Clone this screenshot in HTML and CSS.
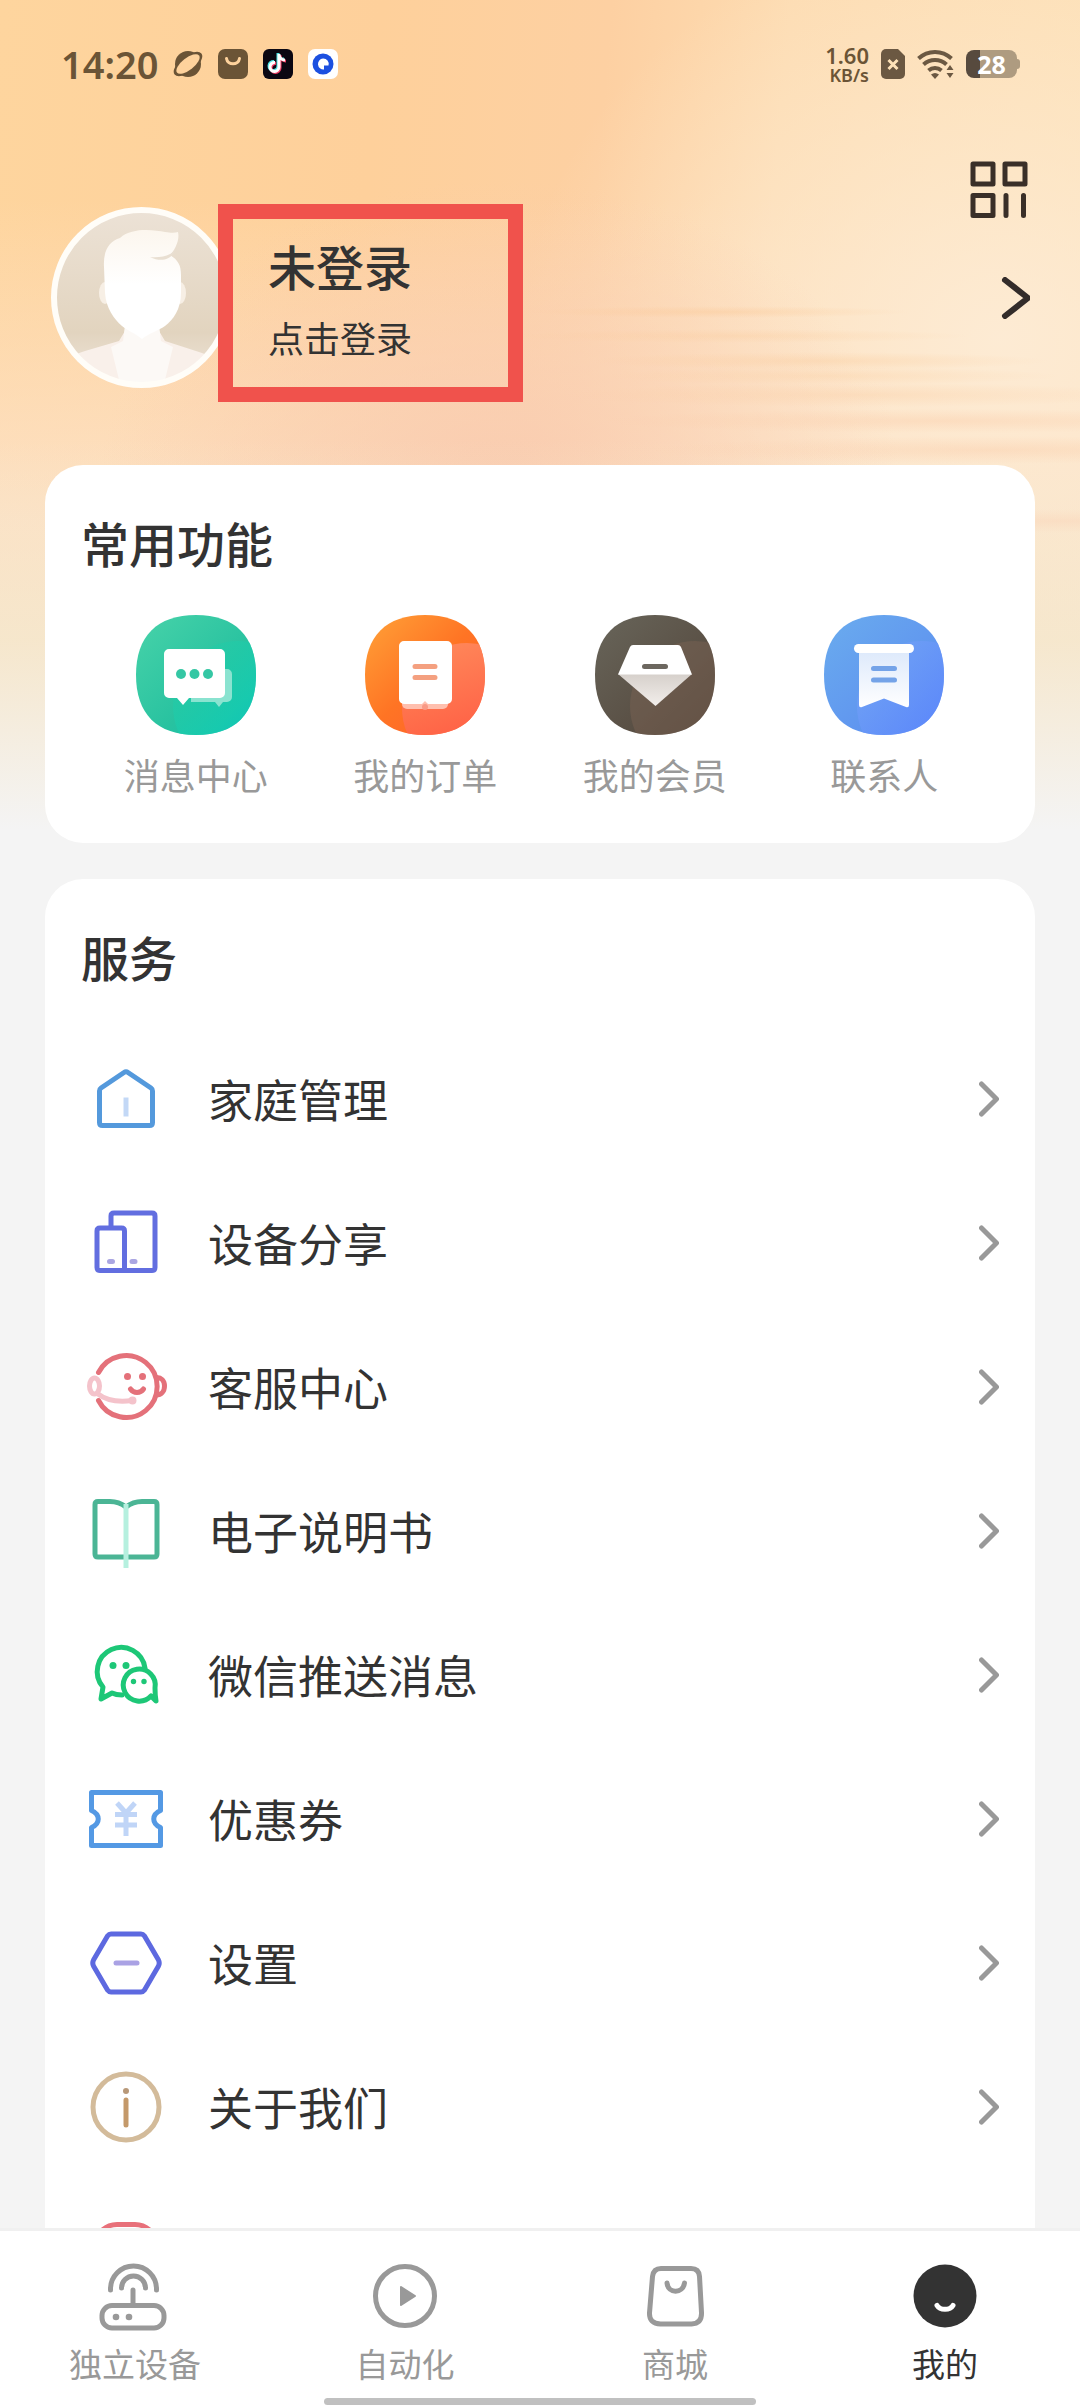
FILE: index.html
```html
<!DOCTYPE html>
<html lang="zh-CN">
	<head>
		<meta charset="UTF-8">
		<meta name="viewport" content="width=device-width">
		<title>我的</title>
		<link rel="stylesheet" href="styles.css">
	</head>
	<body>
		<main class="page">
			<header class="status">
				<div class="status-left">
					<span class="time">14:20</span>
					<svg width="30" height="30" viewBox="0 0 30 30">
						<circle cx="15" cy="15" r="13" fill="#6b5436"/>
						<ellipse cx="15" cy="15" rx="17" ry="8" fill="#6b5436" transform="rotate(-38 15 15)"/>
						<ellipse cx="15" cy="15" rx="14" ry="6" fill="#fed29c" transform="rotate(-38 15 15)"/>
					</svg>
					<svg width="30" height="30" viewBox="0 0 30 30">
						<rect width="30" height="30" rx="7" fill="#6b5436"/>
						<path d="M8.500 9.500c1 7 12 7 13 0" fill="none" stroke="#fed29c" stroke-width="3" stroke-linecap="round"/>
					</svg>
					<svg width="30" height="30" viewBox="0 0 30 30">
						<rect width="30" height="30" rx="6" fill="#0b0712"/>
						<path d="M16 5v13a4.500 4.500 0 1 1-4-4.500M16 6c1 4 3 5 6 5" transform="translate(-1 -1)" fill="none" stroke="#4ce4e4" stroke-width="3"/>
						<path d="M16 5v13a4.500 4.500 0 1 1-4-4.500M16 6c1 4 3 5 6 5" transform="translate(1 1)" fill="none" stroke="#ef3c64" stroke-width="3"/>
						<path d="M16 5v13a4.500 4.500 0 1 1-4-4.500M16 6c1 4 3 5 6 5" fill="none" stroke="#fff" stroke-width="3"/>
					</svg>
					<svg width="30" height="30" viewBox="0 0 30 30">
						<rect width="30" height="30" rx="7" fill="#fff"/>
						<circle cx="15" cy="15" r="10.500" fill="#1c50e0"/>
						<path d="M15 9.500a5.500 5.500 0 1 0 1 11v-4h4.500a5.500 5.500 0 0 0-5.500-7z" fill="#fff"/>
					</svg>
				</div>
				<div class="status-right">
					<div class="speed"><b>1.60</b><span>KB/s</span></div>
					<svg width="24" height="30" viewBox="0 0 24 30">
						<path d="M5 0h12l7 7v18a5 5 0 0 1-5 5H5a5 5 0 0 1-5-5V5a5 5 0 0 1 5-5z" fill="#6b5842"/>
						<path d="M7.500 11l9 9m0-9l-9 9" stroke="#fee2b8" stroke-width="3"/>
					</svg>
					<svg width="37" height="30" viewBox="0 0 37 30">
						<g fill="none" stroke="#6b5842" stroke-width="4">
							<path d="M1.500 9.500a24 24 0 0 1 33 0"/>
							<path d="M6.500 15.500a17 17 0 0 1 23 0"/>
							<path d="M11.500 21.500a10 10 0 0 1 13 0"/>
						</g>
						<path d="M14 25.500q4-3 8 0l-4 4.500z" fill="#6b5842"/>
						<path d="M33 16l3.500 5h-7zM33 29l3.500-5h-7z" fill="#6b5842"/>
					</svg>
					<div class="battery"><span>28</span></div>
				</div>
			</header>

			<section class="profile">
				<a class="user" href="#login">
					<svg class="avatar" width="181" height="181" viewBox="0 0 181 181">
						<defs>
							<linearGradient id="avatar-bg" x1="0" y1="0" x2="0" y2="1">
								<stop offset="0" stop-color="#ece2d6"/>
								<stop offset=".7" stop-color="#e2d4bf"/>
								<stop offset="1" stop-color="#efe6dc"/>
							</linearGradient>
							<linearGradient id="hair" x1="0" y1="0" x2="0" y2="1">
								<stop offset="0" stop-color="#fcf6ee"/>
								<stop offset=".5" stop-color="#ffffff"/>
							</linearGradient>
							<clipPath id="avatar-clip"><circle cx="90.500" cy="90.500" r="87"/></clipPath>
						</defs>
						<circle cx="90.500" cy="90.500" r="87.500" fill="url(#avatar-bg)"/>
						<g clip-path="url(#avatar-clip)">
							<path d="M0 181C4 158 20 148 34 144l34-10 6-10h34l6 10 34 11c14 4 30 16 33 36z" fill="#f9f0ea"/>
							<path d="M74 118h34l2 16 12 6-10 41H70L60 140l12-6z" fill="#fcf9f6"/>
							<ellipse cx="54" cy="86" rx="6" ry="11" fill="#f7efe5"/>
							<ellipse cx="129" cy="86" rx="6" ry="11" fill="#f7efe5"/>
							<path d="M53 60c-1-16 5-26 16-29 12-11 34-8 45-6 6 1 10 1 13 0 2 8-3 18-8 23 8 5 11 10 11 20v18c0 16-8 27-16 33-7 5-16 7-23 13-7-6-14-8-20-13-8-7-16-18-17-33z" fill="url(#hair)"/>
							<path d="M99 50c10 1 20-1 25-7-3 9-13 13-25 7z" fill="#e9dfd2"/>
						</g>
						<circle cx="90.500" cy="90.500" r="87.500" fill="none" stroke="#fffdf8" stroke-width="6"/>
					</svg>
					<span class="login">
						<strong>未登录</strong>
						<span>点击登录</span>
					</span>
				</a>
				<div class="tools">
					<button type="button" aria-label="二维码">
						<svg width="60" height="57" viewBox="0 0 60 57" fill="none" stroke="#3a2f28" stroke-width="5" stroke-linejoin="round" stroke-linecap="round">
							<path d="M3 3h20v20H3zM35 3h20v20H35zM3 34.500h20v20H3zM36 34.500v20M53.500 34.500v20"/>
						</svg>
					</button>
					<button type="button" aria-label="个人资料">
						<svg width="60" height="42" viewBox="0 0 60 42" fill="none" stroke="#332c2a" stroke-width="6" stroke-linejoin="round" stroke-linecap="round">
							<path d="M35 3l23 18-23 18"/>
						</svg>
					</button>
				</div>
			</section>

			<section class="card">
				<h2>常用功能</h2>
				<nav class="shortcuts">
					<a href="#message">
						<svg width="120" height="120" viewBox="0 0 120 120">
							<defs>
								<linearGradient id="green" x1="0" y1="0" x2="1" y2="1"><stop offset="0" stop-color="#48d3a9"/><stop offset=".6" stop-color="#28c2a0"/><stop offset="1" stop-color="#10bfb4"/></linearGradient>
								<linearGradient id="green2" x1="0" y1="0" x2="1" y2="1"><stop offset="0" stop-color="#2cc9a0"/><stop offset=".5" stop-color="#16cdb0"/><stop offset="1" stop-color="#00b8c8"/></linearGradient>
								<clipPath id="tile"><path d="M60 0c39 0 60 21 60 60s-21 60-60 60S0 99 0 60 21 0 60 0z"/></clipPath>
							</defs>
							<g clip-path="url(#tile)">
								<rect width="120" height="120" fill="url(#green)"/>
								<circle cx="102" cy="91" r="65" fill="url(#green2)" opacity=".7"/>
							</g>
							<path d="M55 54h36a5 5 0 0 1 5 5v23a5 5 0 0 1-5 5h-4l-4 5-4-5H55z" fill="#8ae3d0"/>
							<path d="M33 34h51a5 5 0 0 1 5 5v39a5 5 0 0 1-5 5H53l-6 7-6-7h-8a5 5 0 0 1-5-5V39a5 5 0 0 1 5-5z" fill="#fff"/>
							<g fill="#35c7a4"><circle cx="45" cy="59" r="5"/><circle cx="58.500" cy="59" r="5"/><circle cx="72" cy="59" r="5"/></g>
						</svg>
						<span>消息中心</span>
					</a>
					<a href="#order">
						<svg width="120" height="120" viewBox="0 0 120 120">
							<defs>
								<linearGradient id="orange" x1="0" y1="0" x2="1" y2="1"><stop offset="0" stop-color="#ffa238"/><stop offset=".5" stop-color="#ff7424"/><stop offset="1" stop-color="#ff5c30"/></linearGradient>
								<linearGradient id="orange2" x1=".3" y1="0" x2=".6" y2="1"><stop offset="0" stop-color="#ff8a62"/><stop offset="1" stop-color="#ff5040"/></linearGradient>
							</defs>
							<g clip-path="url(#tile)">
								<rect width="120" height="120" fill="url(#orange)"/>
								<circle cx="102" cy="93" r="65" fill="url(#orange2)" opacity=".85"/>
							</g>
							<path d="M37 86h46v3a5 5 0 0 1-5 5H42a5 5 0 0 1-5-5z" fill="#ffbfae"/>
							<path d="M39 26h43a5 5 0 0 1 5 5v53a5 5 0 0 1-5 5H63l-3-3-3 3H39a5 5 0 0 1-5-5V31a5 5 0 0 1 5-5z" fill="#fff"/>
							<circle cx="60" cy="92" r="3" fill="#f99a86"/>
							<path d="M50 51.500h20M50 62.500h20" stroke="#f4a080" stroke-width="5" stroke-linecap="round"/>
						</svg>
						<span>我的订单</span>
					</a>
					<a href="#member">
						<svg width="120" height="120" viewBox="0 0 120 120">
							<defs>
								<linearGradient id="brown" x1="0" y1="0" x2="1" y2="1"><stop offset="0" stop-color="#68655a"/><stop offset="1" stop-color="#514338"/></linearGradient>
								<linearGradient id="gem" x1="0" y1="0" x2="0" y2="1"><stop offset="0" stop-color="#d6d0cb"/><stop offset="1" stop-color="#f2eeeb"/></linearGradient>
							</defs>
							<g clip-path="url(#tile)">
								<rect width="120" height="120" fill="url(#brown)"/>
								<circle cx="100" cy="91" r="65" fill="#7c6454" opacity=".45"/>
							</g>
							<path d="M23 59h74L60.500 91z" fill="url(#gem)"/>
							<path d="M38 30h45q2 0 3 2l11 27.500H23L35 32q1-2 3-2z" fill="#fff"/>
							<path d="M49.500 51.500h21" stroke="#6c675f" stroke-width="5" stroke-linecap="round"/>
						</svg>
						<span>我的会员</span>
					</a>
					<a href="#contact">
						<svg width="120" height="120" viewBox="0 0 120 120">
							<defs>
								<linearGradient id="blue" x1="0" y1="0" x2="1" y2="1"><stop offset="0" stop-color="#6aacee"/><stop offset="1" stop-color="#5a88f0"/></linearGradient>
								<linearGradient id="blue2" x1="0" y1="0" x2=".7" y2=".6"><stop offset="0" stop-color="#7aaaf4"/><stop offset="1" stop-color="#5c86ff"/></linearGradient>
								<linearGradient id="flag" x1="0" y1="0" x2="0" y2="1"><stop offset="0" stop-color="#dde9fb"/><stop offset="1" stop-color="#ffffff"/></linearGradient>
							</defs>
							<g clip-path="url(#tile)">
								<rect width="120" height="120" fill="url(#blue)"/>
								<circle cx="98" cy="91" r="65" fill="url(#blue2)" opacity=".7"/>
							</g>
							<path d="M35 36h50v54q0 3-3 2L60 83.500 38 92q-3 1-3-2z" fill="url(#flag)"/>
							<rect x="30" y="29" width="60" height="9" rx="4.500" fill="#fff"/>
							<path d="M49.500 53.500h21M49.500 65h21" stroke="#74a3e8" stroke-width="5" stroke-linecap="round"/>
						</svg>
						<span>联系人</span>
					</a>
				</nav>
			</section>

			<section class="card services">
				<h2>服务</h2>
				<ul>
					<li><a href="#home">
						<svg class="icon" viewBox="0 0 90 90" stroke="#5499dc">
							<path d="M43 18.500q2-1.500 4 0L70 34q1.500 1 1.500 3v31.500q0 3-3 3h-47q-3 0-3-3V37q0-2 1.500-3z"/>
							<path d="M45 43.500v19" stroke="#c3d8f6" stroke-linecap="butt"/>
						</svg>
						<span>家庭管理</span>
						<svg class="arrow" viewBox="0 0 20 36"><path d="M2.500 3l15 15-15 15"/></svg>
					</a></li>
					<li><a href="#share">
						<svg class="icon" viewBox="0 0 90 90" stroke="#626ee0">
							<path d="M30 30V18q0-3 3-3h38q3 0 3 3v51.500q0 3-3 3H19q-3 0-3-3V33q0-3 3-3h21.500q3 0 3 3v39"/>
							<path d="M28.500 63.500h3M51 63.500h3" stroke="#aaa6e2"/>
						</svg>
						<span>设备分享</span>
						<svg class="arrow" viewBox="0 0 20 36"><path d="M2.500 3l15 15-15 15"/></svg>
					</a></li>
					<li><a href="#support">
						<svg class="icon" viewBox="0 0 90 90" stroke="#e4717a">
							<path d="M17.500 30.500a31 31 0 1 1 0 28"/>
							<path d="M76 35.500c4 0 7.500 3 7.500 8.500S80 53 75.500 53"/>
							<ellipse cx="13.500" cy="44" rx="5" ry="8" stroke="#f4c3cb"/>
							<path d="M17 52c9 7 22 8 34 6.500" stroke="#f4c3cb"/>
							<circle cx="51.500" cy="58.500" r="1.500" stroke="#f4c3cb"/>
							<path d="M49.500 47c3 4.500 10 4.500 13 0"/>
							<g fill="#e4717a" stroke="none"><circle cx="46.500" cy="34.500" r="3.500"/><circle cx="61.500" cy="34.500" r="3.500"/></g>
						</svg>
						<span>客服中心</span>
						<svg class="arrow" viewBox="0 0 20 36"><path d="M2.500 3l15 15-15 15"/></svg>
					</a></li>
					<li><a href="#manual">
						<svg class="icon" viewBox="0 0 90 90" stroke="#4bb595">
							<path d="M45 21q-7-5.500-16-5.500H17q-3 0-3 3v49.500q0 3 3 3h56q3 0 3-3V18.500q0-3-3-3H61q-9 0-16 5.500"/>
							<path d="M45 18v64" stroke="#b6f0df" stroke-linecap="butt"/>
						</svg>
						<span>电子说明书</span>
						<svg class="arrow" viewBox="0 0 20 36"><path d="M2.500 3l15 15-15 15"/></svg>
					</a></li>
					<li><a href="#wechat">
						<svg class="icon" viewBox="0 0 90 90" stroke="#1dc777">
							<path d="M41 65q-6 0-10-2l-11 6 2-12A24 24 0 1 1 64 38"/>
							<path d="M70 66a16 16 0 1 1 4-8q0 7 1 13z"/>
							<g fill="#1dc777" stroke="none"><circle cx="32" cy="35.500" r="3.500"/><circle cx="45" cy="35.500" r="3.500"/><circle cx="52.500" cy="51.500" r="2.700"/><circle cx="63" cy="51.500" r="2.700"/></g>
						</svg>
						<span>微信推送消息</span>
						<svg class="arrow" viewBox="0 0 20 36"><path d="M2.500 3l15 15-15 15"/></svg>
					</a></li>
					<li><a href="#coupon">
						<svg class="icon" viewBox="0 0 90 90" stroke="#5499e4">
							<path d="M10.500 18.500h69v18c-9 4-9 13 0 17v18h-69v-18c9-4 9-13 0-17z"/>
							<path d="M36 29l9 10 9-10M45 39v23M34 40.500h22M34 51h22" stroke="#c0d5f7" stroke-linecap="butt"/>
						</svg>
						<span>优惠券</span>
						<svg class="arrow" viewBox="0 0 20 36"><path d="M2.500 3l15 15-15 15"/></svg>
					</a></li>
					<li><a href="#settings">
						<svg class="icon" viewBox="0 0 90 90" stroke="#5d69e0">
							<path d="M30 16h30q2 0 3.500 2l14 24q1.500 3 0 6l-14 24q-1.500 2-3.500 2H30q-2 0-3.500-2l-14-24q-1.500-3 0-6l14-24q1.500-2 3.500-2z"/>
							<path d="M35 45h21" stroke="#aaa2e4"/>
						</svg>
						<span>设置</span>
						<svg class="arrow" viewBox="0 0 20 36"><path d="M2.500 3l15 15-15 15"/></svg>
					</a></li>
					<li><a href="#about">
						<svg class="icon" viewBox="0 0 90 90" stroke="#d3bb9a">
							<circle cx="45" cy="45" r="33"/>
							<path d="M45 38v25" stroke="#c4996a"/>
							<circle cx="45" cy="29" r="3" fill="#b89878" stroke="none"/>
						</svg>
						<span>关于我们</span>
						<svg class="arrow" viewBox="0 0 20 36"><path d="M2.500 3l15 15-15 15"/></svg>
					</a></li>
					<li><a href="#more" aria-label="更多">
						<svg class="icon" viewBox="0 0 90 90" stroke="#e8707a">
							<rect x="14" y="18.500" width="62" height="56" rx="22"/>
						</svg>
					</a></li>
				</ul>
			</section>
		</main>

		<footer class="tabbar">
			<nav class="tabs">
				<a href="#device">
					<svg viewBox="0 0 72 72">
						<path d="M11.500 30v-1a23 23 0 0 1 46 0v1M22.500 28a12 12 0 0 1 24 0M34 30v14"/>
						<rect x="3" y="45.500" width="62" height="22.500" rx="10"/>
						<g fill="#999" stroke="none"><circle cx="17" cy="57" r="3.300"/><circle cx="30" cy="57" r="3.300"/></g>
					</svg>
					<span>独立设备</span>
				</a>
				<a href="#auto">
					<svg viewBox="0 0 72 72">
						<circle cx="36" cy="36" r="29.500"/>
						<path d="M32 27l14 9-14 9z" fill="#999" stroke-width="2"/>
					</svg>
					<span>自动化</span>
				</a>
				<a href="#shop">
					<svg viewBox="0 0 72 72">
						<path d="M22 8.500h30q8 0 8.500 8l2 36q.5 11-10 11.500h-31Q10 63.500 10.500 53l3-36.500q1-8 8.500-8z"/>
						<path d="M28 23c1 11 16 11 17.500 0"/>
					</svg>
					<span>商城</span>
				</a>
				<a class="now" href="#mine">
					<svg viewBox="0 0 72 72">
						<circle cx="36" cy="36" r="31.500" fill="#333" stroke="none"/>
						<path d="M28 45.500c3 5 13 5 16 0" stroke="#fff"/>
					</svg>
					<span>我的</span>
				</a>
			</nav>
			<div class="home-bar"></div>
		</footer>
	</body>
</html>
```

FILE: styles.css
```css
*{margin: 0;padding: 0;box-sizing: border-box;}
body{
	height: 100vh;
	display: flex;
	flex-direction: column;
	background: #f4f4f4;
	font-family: "Noto Sans CJK SC", sans-serif;
	color: #333;
}
ul{list-style: none;}
a{color: inherit;text-decoration: none;}
svg{display: block;flex: none;}
button{border: 0;background: none;}

.page{
	flex: 1;
	min-height: 0;
	overflow: auto;
	scrollbar-width: none;
	/* streaks, fade to grey, then the warm glow */
	background:
		radial-gradient(190px 6px at 720px 312px, rgba(250,195,140,.35), transparent),
		radial-gradient(230px 7px at 740px 336px, rgba(250,200,150,.3), transparent),
		radial-gradient(230px 9px at 820px 361px, rgba(250,200,150,.35), transparent),
		radial-gradient(230px 9px at 830px 376px, rgba(250,203,155,.3), transparent),
		radial-gradient(300px 12px at 860px 395px, rgba(250,203,160,.35), transparent),
		radial-gradient(340px 12px at 940px 421px, rgba(250,198,160,.35), transparent),
		radial-gradient(340px 14px at 990px 450px, rgba(250,198,160,.35), transparent),
		radial-gradient(300px 12px at 1060px 521px, rgba(250,205,175,.35), transparent),
		linear-gradient(transparent 440px, rgba(244,232,206,.8) 640px, #f4f4f4 830px),
		radial-gradient(400px 300px at 500px 480px, rgba(249,202,174,.9), rgba(249,202,174,0)),
		radial-gradient(480px 420px at 1000px 340px, rgba(253,236,214,.9), rgba(253,236,214,0)),
		linear-gradient(rgba(253,226,200,0) 200px, rgba(253,226,200,.9) 520px),
		linear-gradient(95deg, #fed59e 0, #fed09b 30%, #fdd0a2 48%, #fddcb2 62%, #fde2b8 100%);
}

.status{
	height: 128px;
	padding: 0 60px 0 61px;
	display: flex;
	align-items: center;
	justify-content: space-between;
	font-family: "Noto Sans", sans-serif;
	color: #6b5436;
}
.status-left{
	display: flex;
	align-items: center;
	gap: 15px;
}
.time{
	font-size: 38px;
	font-weight: 600;
	line-height: 44px;
}
.status-right{
	display: flex;
	align-items: center;
	gap: 12px;
}
.speed{
	display: flex;
	flex-direction: column;
	align-items: flex-end;
	font-weight: 600;
}
.speed b{
	font-size: 22px;
	line-height: 22px;
	font-weight: 600;
}
.speed span{
	font-size: 18px;
	line-height: 18px;
}
.battery{
	position: relative;
	width: 51px;
	height: 28px;
	margin-right: 3px;
	border-radius: 8px;
	background: linear-gradient(90deg, #574a3e 28%, #ae9b80 28%);
	color: #fff;
	font-size: 25px;
	font-weight: 700;
	line-height: 28px;
	text-align: center;
}
.battery::after{
	content: "";
	position: absolute;
	left: 100%;
	top: 9px;
	width: 3px;
	height: 10px;
	border-radius: 0 3px 3px 0;
	background: #ae9b80;
}

.profile{
	display: flex;
	justify-content: space-between;
	padding: 33px 50px 0 51px;
}
.user{
	display: flex;
	align-items: flex-start;
	margin-top: 43px;
}
.avatar{margin-top: 3px;}
.login{
	display: flex;
	flex-direction: column;
	gap: 16px;
	width: 305px;
	margin-left: -14px;
	padding: 14px 35px 26px;
	border: 15px solid #f0524c;
}
.login strong{
	font-size: 48px;
	line-height: 64px;
	font-weight: 500;
}
.login span{
	font-size: 36px;
	line-height: 48px;
}
.tools{
	display: flex;
	flex-direction: column;
	gap: 59px;
}

.card{
	margin: 63px 45px 0;
	padding: 43px 36px 0;
	border-radius: 38px;
	background: #fff;
}
.card h2{
	font-size: 48px;
	line-height: 68px;
	font-weight: 500;
}
.shortcuts{
	display: grid;
	grid-template-columns: repeat(4, 1fr);
	padding: 39px 0 45px;
}
.shortcuts a{
	display: flex;
	flex-direction: column;
	align-items: center;
	gap: 15px;
	font-size: 36px;
	line-height: 48px;
	color: #999;
}
.services{
	margin-top: 36px;
}
.services ul{padding-top: 37px;}
.services a{
	height: 144px;
	display: flex;
	align-items: center;
	gap: 37px;
	font-size: 45px;
	line-height: 60px;
}
.icon{
	width: 90px;
	height: 90px;
	fill: none;
	stroke-width: 5;
	stroke-linecap: round;
	stroke-linejoin: round;
}
.arrow{
	width: 20px;
	height: 36px;
	margin-left: auto;
	fill: none;
	stroke: #999;
	stroke-width: 5;
	stroke-linecap: round;
	stroke-linejoin: round;
}

.tabbar{
	border-top: 3px solid #f0f0f0;
	background: #fff;
	padding-bottom: 3px;
}
.tabs{
	display: grid;
	grid-template-columns: repeat(4, 1fr);
	padding: 29px 0 13px;
}
.tabs a{
	display: flex;
	flex-direction: column;
	align-items: center;
	gap: 9px;
	font-size: 33px;
	line-height: 44px;
	color: #999;
}
.tabs svg{
	width: 72px;
	height: 72px;
	fill: none;
	stroke: #999;
	stroke-width: 5;
	stroke-linecap: round;
	stroke-linejoin: round;
}
.tabs .now{color: #333;}
.home-bar{
	width: 40%;
	height: 7px;
	margin: 0 auto;
	border-radius: 4px;
	background: #c0c0c0;
}
```
